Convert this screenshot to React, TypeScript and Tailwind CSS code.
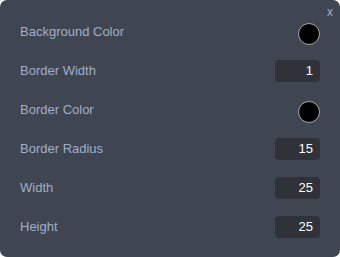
import React from "react";

type Row = { label: string; kind: "color" | "num"; value?: string };

const rows: Row[] = [
  { label: "Background Color", kind: "color" },
  { label: "Border Width", kind: "num", value: "1" },
  { label: "Border Color", kind: "color" },
  { label: "Border Radius", kind: "num", value: "15" },
  { label: "Width", kind: "num", value: "25" },
  { label: "Height", kind: "num", value: "25" },
];

export default function App() {
  return (
    <div className="w-[340px] h-[257px] bg-white">
      <div
        className="relative w-[340px] h-[257px] bg-[#404552] rounded-[7px] pt-[12px] pl-[20px] pr-[20px]"
        style={{ fontFamily: '"Liberation Sans", Arial, sans-serif' }}
      >
        <div className="absolute top-[4px] right-[7px] text-[12px] leading-[16px] text-[#a3aec0]">x</div>
        {rows.map((r) => (
          <div key={r.label} className="flex items-center justify-between h-[39px]">
            <span className="text-[13px] text-[#9fb0c9]">{r.label}</span>
            {r.kind === "color" ? (
              <div className="mt-[5px] w-[22px] h-[22px] rounded-full bg-black border border-[#a9a9a9]" />
            ) : (
              <div className="w-[45px] h-[22px] rounded-[4px] bg-[#2f3238] text-white text-[13px] leading-[22px] text-right pr-[7px]">
                {r.value}
              </div>
            )}
          </div>
        ))}
      </div>
    </div>
  );
}
